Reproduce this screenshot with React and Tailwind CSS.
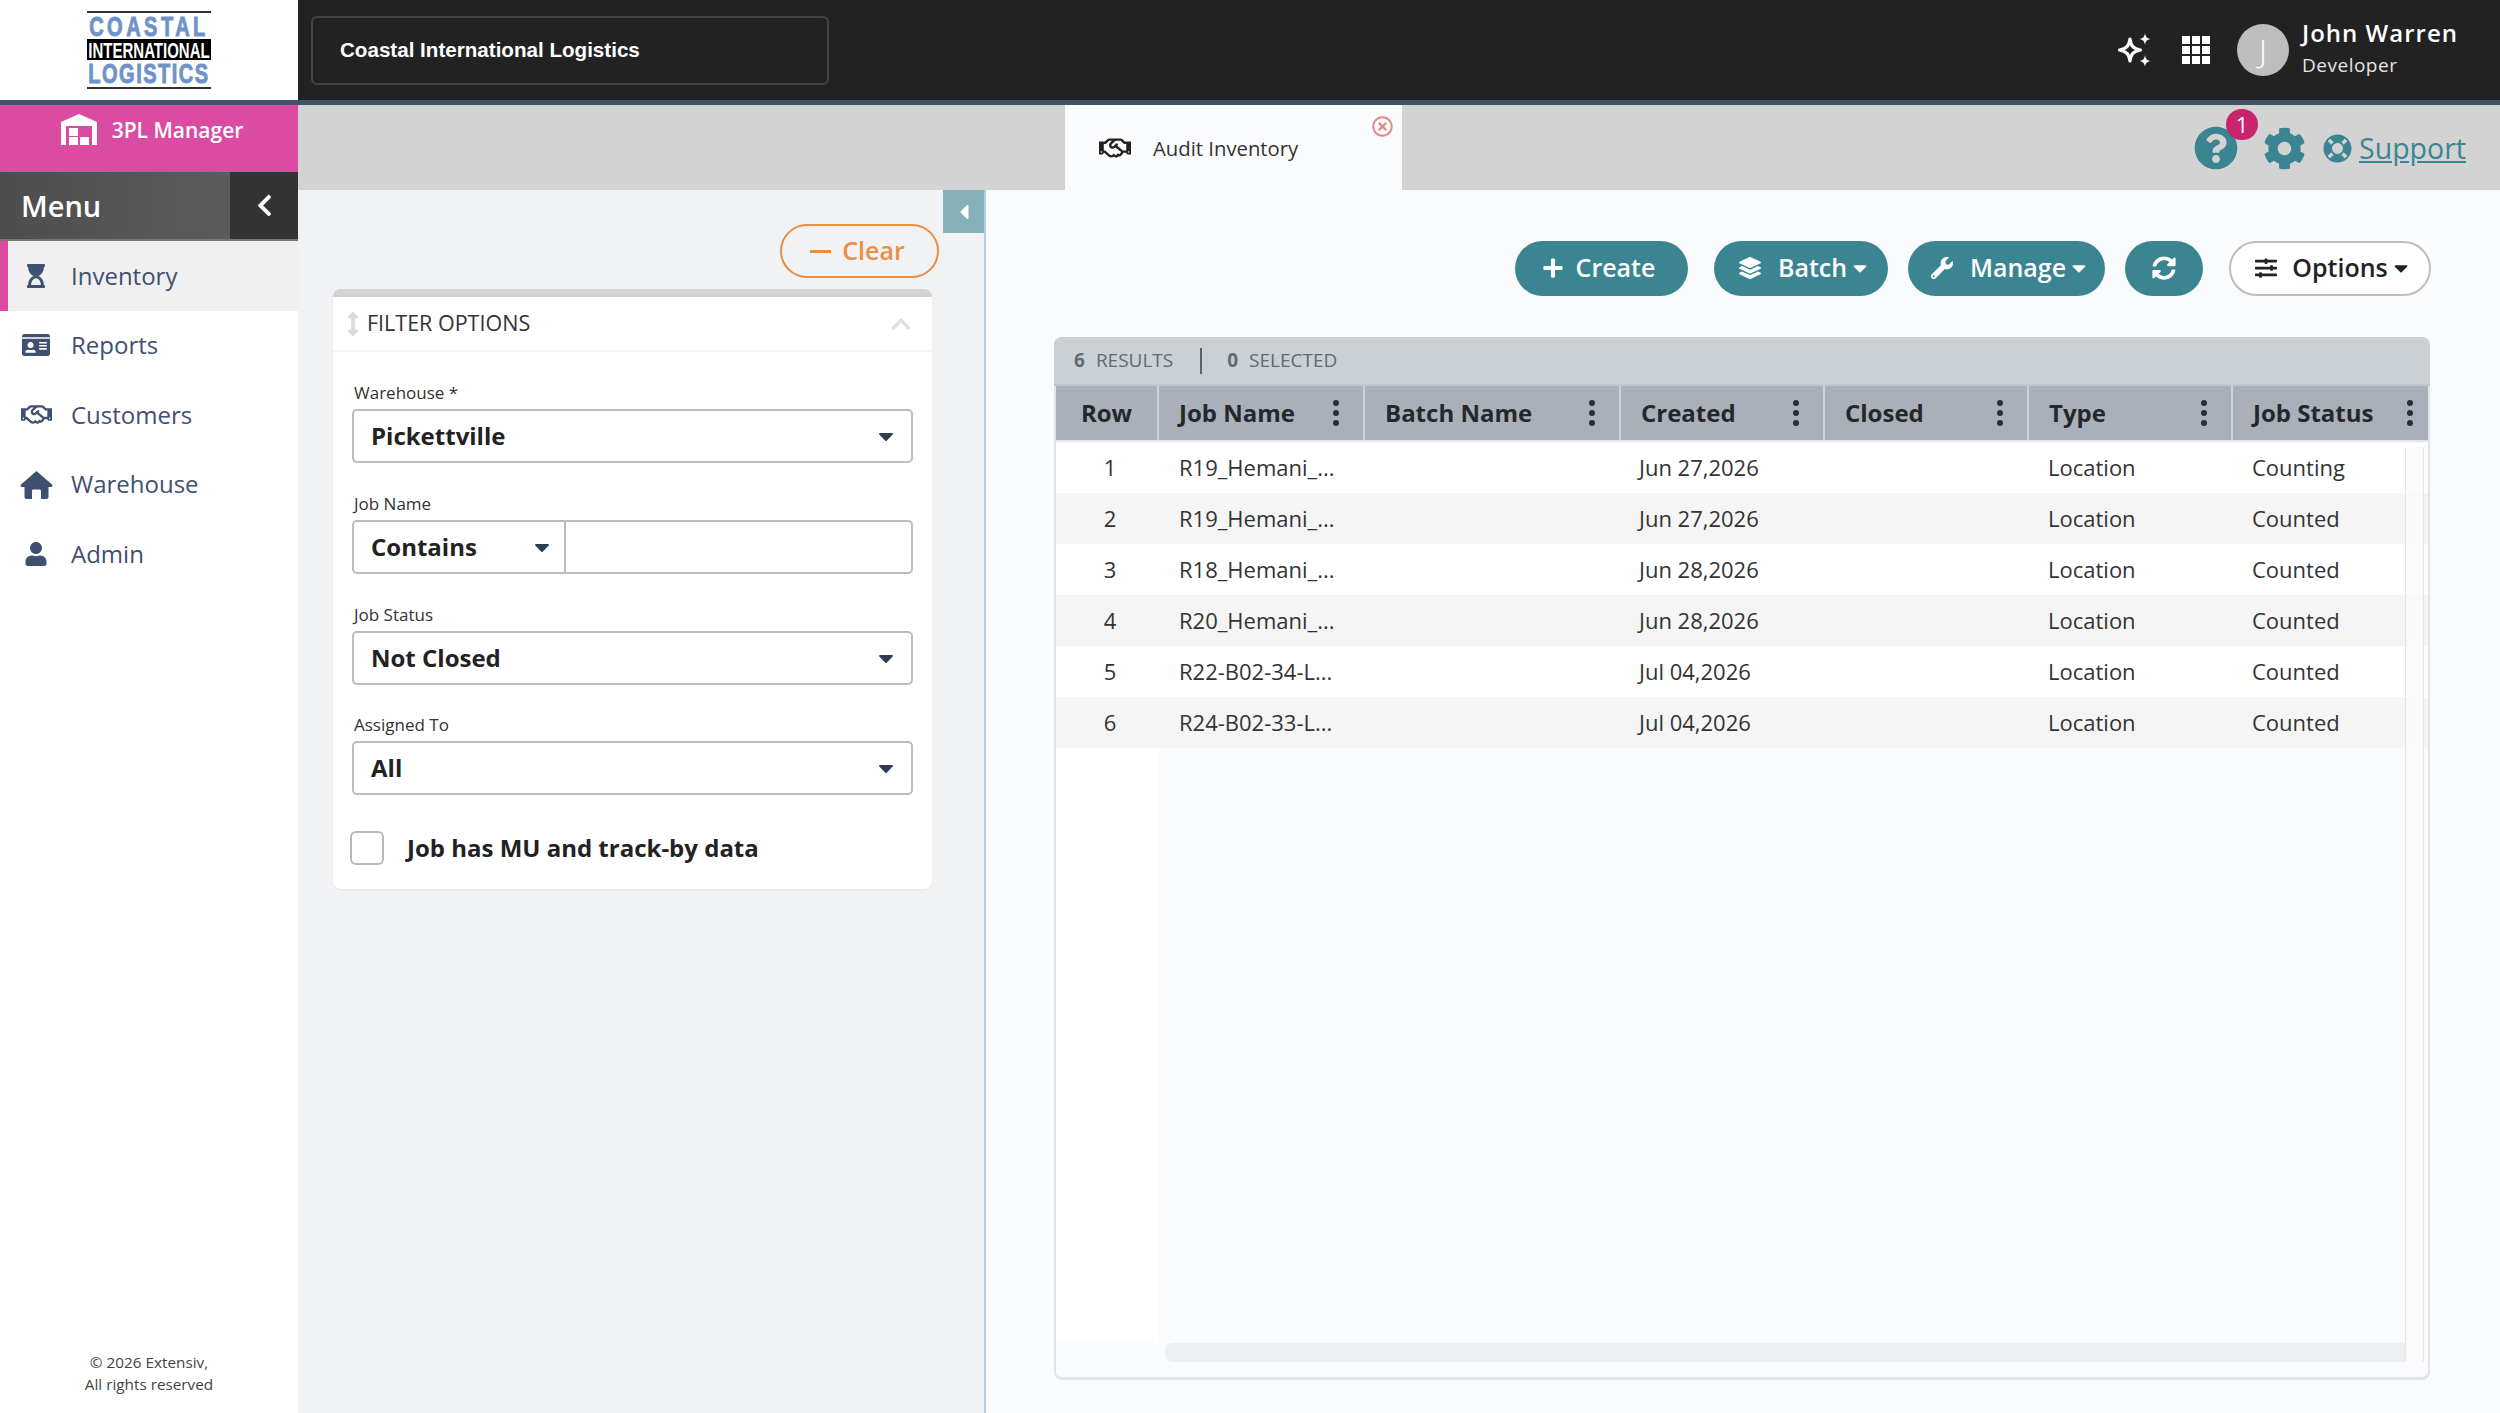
import React from 'react';
import {
    FaHourglassStart, FaIdCard, FaRegHandshake, FaUser, FaChevronLeft, FaPlus, FaLayerGroup,
    FaWrench, FaSyncAlt, FaSlidersH, FaQuestionCircle, FaCog, FaLifeRing, FaCaretDown, FaCaretLeft,
    FaRegTimesCircle, FaChevronUp, FaArrowsAltV,
} from 'react-icons/fa';

const FONT = { fontFamily: '"Open Sans", sans-serif' };

function HomeIcon({ size }) {
    return (
        <svg width={size} height={size} viewBox="0 0 33 33" fill="currentColor">
            <path d="M16.5 3 L32 16.5 C33 17.5 32.3 19 31 19 H28.5 V29 C28.5 30.2 27.5 31 26.5 31 H21 V23 C21 22 20.3 21.5 19.5 21.5 H13.5 C12.7 21.5 12 22 12 23 V31 H6.5 C5.5 31 4.5 30.2 4.5 29 V19 H2 C0.7 19 0 17.5 1 16.5 Z" />
        </svg>
    );
}

const navItems = [
    { label: 'Inventory', icon: FaHourglassStart, size: 24, active: true },
    { label: 'Reports', icon: FaIdCard, size: 28 },
    { label: 'Customers', icon: FaRegHandshake, size: 31 },
    { label: 'Warehouse', icon: HomeIcon, size: 33 },
    { label: 'Admin', icon: FaUser, size: 24 },
];

const columns = [
    { label: 'Job Name', width: 'w-[206px]' },
    { label: 'Batch Name', width: 'w-[256px]' },
    { label: 'Created', width: 'w-[204px]' },
    { label: 'Closed', width: 'w-[204px]' },
    { label: 'Type', width: 'w-[204px]' },
    { label: 'Job Status', width: 'flex-1' },
];

const rows = [
    ['1', 'R19_Hemani_...', '', 'Jun 27,2026', '', 'Location', 'Counting'],
    ['2', 'R19_Hemani_...', '', 'Jun 27,2026', '', 'Location', 'Counted'],
    ['3', 'R18_Hemani_...', '', 'Jun 28,2026', '', 'Location', 'Counted'],
    ['4', 'R20_Hemani_...', '', 'Jun 28,2026', '', 'Location', 'Counted'],
    ['5', 'R22-B02-34-L...', '', 'Jul 04,2026', '', 'Location', 'Counted'],
    ['6', 'R24-B02-33-L...', '', 'Jul 04,2026', '', 'Location', 'Counted'],
];

function Logo() {
    const narrow = { fontFamily: '"Liberation Sans", sans-serif' };
    return (
        <div className="w-[124px] h-[78px] flex flex-col border-y-2 border-[#333]" style={narrow}>
            <div className="h-[24px] mt-[1px] flex items-center justify-center text-[#6f93c9] [-webkit-text-stroke:0.7px_#6f93c9] font-bold text-[20px] leading-none tracking-[3.5px] scale-y-[1.4] whitespace-nowrap">COASTAL</div>
            <div className="h-[21px] mt-[1px] bg-black flex items-center justify-center text-white font-bold text-[15px] leading-none whitespace-nowrap">
                <span className="scale-y-[1.5] inline-block">INTERNATIONAL</span>
            </div>
            <div className="h-[24px] mt-[1px] flex items-center justify-center text-[#6f93c9] [-webkit-text-stroke:0.7px_#6f93c9] font-bold text-[20px] leading-none tracking-[1.5px] scale-y-[1.4] whitespace-nowrap">LOGISTICS</div>
        </div>
    );
}

function WarehouseIcon() {
    return (
        <svg width="36" height="31" viewBox="0 0 36 31" fill="white">
            <path fillRule="evenodd" d="M18 0 L36 8 V31 H31 V12 H5 V31 H0 V8 Z" />
            <rect x="8" y="14" width="9" height="8" />
            <rect x="8" y="23" width="9" height="8" />
            <rect x="19" y="23" width="9" height="8" />
        </svg>
    );
}

function Sparkle() {
    return (
        <svg width="34" height="34" viewBox="0 0 34 34" fill="none">
            <path d="M12 6 C13 13 15 15.5 22.5 17 C15 18.5 13 21 12 28 C11 21 8.5 18.5 1.5 17 C8.5 15.5 11 13 12 6 Z" stroke="white" strokeWidth="3.2" strokeLinejoin="round" />
            <path d="M27 0 C27.6 4 29 5.4 32.5 6 C29 6.7 27.6 8 27 12 C26.4 8 25 6.7 21.5 6 C25 5.4 26.4 4 27 0 Z" fill="white" />
            <path d="M27 22 C27.6 26 29 27.4 32.5 28 C29 28.7 27.6 30 27 34 C26.4 30 25 28.7 21.5 28 C25 27.4 26.4 26 27 22 Z" fill="white" />
        </svg>
    );
}

function AppsGrid() {
    return (
        <div className="grid grid-cols-3 gap-[2px] w-[28px]">
            {Array.from({ length: 9 }).map((_, i) => <div key={i} className="w-[8px] h-[8px] bg-white" />)}
        </div>
    );
}

function Kebab() {
    return (
        <div className="flex flex-col gap-[4px]">
            <div className="w-[6px] h-[6px] rounded-full bg-[#2b2f33]" />
            <div className="w-[6px] h-[6px] rounded-full bg-[#2b2f33]" />
            <div className="w-[6px] h-[6px] rounded-full bg-[#2b2f33]" />
        </div>
    );
}

function SelectBox({ label, value, className = '' }) {
    return (
        <div className={`flex flex-col ${className}`}>
            <label className="h-[34px] pl-[2px] flex items-center text-[17px] text-[#333] leading-none">{label}</label>
            <div className="h-[54px] rounded-[5px] border-2 border-[#bcbcbc] bg-white flex items-center justify-between pl-[17px] pr-[13px]">
                <span className="text-[24px] font-bold text-[#222]">{value}</span>
                <FaCaretDown size={24} className="text-[#2d3b55]" />
            </div>
        </div>
    );
}

function PillButton({ icon: Icon, label, caret, width, gap = 'gap-[17px]', iconSize = 22 }) {
    return (
        <button className={`${width} ${gap} h-[55px] pb-[2px] rounded-full bg-[#3b8592] text-white flex items-center justify-center text-[25px] font-semibold`}>
            <Icon size={iconSize} />
            {label && (
                <span className="flex items-center gap-[2px]">
                    {label}
                    {caret && <FaCaretDown size={22} />}
                </span>
            )}
        </button>
    );
}

export default function App() {
    return (
        <div className="h-screen w-full flex flex-col overflow-hidden bg-white" style={FONT}>
            {/* top bar */}
            <div className="h-[105px] shrink-0 flex border-b-[5px] border-[#42526b] bg-[#222222]">
                <div className="w-[298px] bg-white flex items-center justify-center">
                    <Logo />
                </div>
                <div className="flex-1 flex items-center pl-[13px] pr-[42px]">
                    <div className="w-[518px] h-[69px] rounded-[6px] border-2 border-[#444] flex items-center pl-[27px] text-white text-[20.6px] font-bold" style={{ fontFamily: '"Liberation Sans", sans-serif' }}>
                        Coastal International Logistics
                    </div>
                    <div className="ml-auto flex items-center">
                        <Sparkle />
                        <div className="ml-[30px]"><AppsGrid /></div>
                        <div className="ml-[27px] w-[52px] h-[52px] rounded-full bg-[#bdbdbd] flex items-center justify-center text-white text-[32px] font-light">J</div>
                        <div className="ml-[13px] flex flex-col text-white -mt-[2px]">
                            <span className="text-[24px] font-semibold tracking-[1px] leading-[32px]">John Warren</span>
                            <span className="text-[19px] tracking-[0.5px] leading-[32px] text-[#e4e4e4]">Developer</span>
                        </div>
                    </div>
                </div>
            </div>

            <div className="flex-1 flex min-h-0">
                {/* sidebar */}
                <aside className="w-[298px] shrink-0 flex flex-col bg-white">
                    <div className="h-[67px] bg-[#dc4ba2] flex items-start justify-center gap-[15px] pt-[9px] pl-[6px]">
                        <WarehouseIcon />
                        <span className="text-white text-[21px] font-semibold leading-[32px]">3PL Manager</span>
                    </div>
                    <div className="h-[69px] flex border-b-2 border-[#777]">
                        <div className="flex-1 bg-gradient-to-r from-[#4d4d4d] to-[#5c5c5c] flex items-center pl-[21px] text-white text-[29px] font-semibold">Menu</div>
                        <div className="w-[68px] bg-[#333333] flex items-center justify-center text-white"><FaChevronLeft size={25} /></div>
                    </div>
                    <nav className="flex flex-col">
                        {navItems.map(item => (
                            <div key={item.label} className={`h-[69.5px] flex items-center text-[24px] text-[#3f5070] border-l-[8px] ${item.active ? 'bg-[#f0f0f0] border-[#dc4ba2]' : 'border-transparent'}`}>
                                <div className="w-[56px] flex justify-center"><item.icon size={item.size} /></div>
                                <span className="ml-[7px]">{item.label}</span>
                            </div>
                        ))}
                    </nav>
                    <div className="mt-auto pb-[18px] text-center text-[15.3px] leading-[22px] text-[#444]">
                        © 2026 Extensiv,<br />All rights reserved
                    </div>
                </aside>

                <div className="flex-1 flex flex-col min-w-0">
                    {/* tab strip */}
                    <div className="h-[85px] shrink-0 bg-[#d3d3d3] flex pl-[767px] pr-[34px]">
                        <div className="relative w-[337px] bg-[#fafbfd] flex items-center pl-[34px] gap-[22px]">
                            <FaRegHandshake size={32} className="text-[#222]" />
                            <span className="text-[20.3px] text-[#333] mt-[2px]">Audit Inventory</span>
                            <FaRegTimesCircle size={21} className="absolute right-[9px] top-[11px] text-[#e08a85]" />
                        </div>
                        <div className="ml-auto flex items-center pt-[1px] text-[#3b8592]">
                            <div className="relative">
                                <FaQuestionCircle size={44} />
                                <span className="absolute -top-[17px] -right-[20px] w-[32px] h-[31px] rounded-full bg-[#c9246c] text-white text-[22px] leading-[31px] text-center">1</span>
                            </div>
                            <FaCog size={43} className="ml-[25px]" />
                            <FaLifeRing size={29} className="ml-[17px]" />
                            <span className="ml-[7px] text-[28.5px] underline">Support</span>
                        </div>
                    </div>

                    <div className="flex-1 flex min-h-0">
                        {/* filter panel */}
                        <div className="relative w-[688px] shrink-0 bg-[#f1f2f4] border-r-2 border-[#b5cfdf] pt-[34px]">
                            <div className="absolute right-0 top-0 w-[41px] h-[43px] bg-[#85b1ba] flex items-center justify-center text-white"><FaCaretLeft size={24} /></div>
                            <div className="flex justify-end pr-[45px]">
                                <button className="w-[159px] h-[54px] pr-[4px] rounded-full border-2 border-[#e98e43] flex items-center justify-center gap-[11px] text-[#e98e43] text-[25px] font-semibold">
                                    <span className="w-[21px] h-[3px] bg-[#e98e43]" />Clear
                                </button>
                            </div>
                            <div className="mt-[11px] ml-[35px] w-[599px] h-[600px] rounded-[8px] bg-white border-t-[8px] border-[#d0d3d8] shadow-[0_1px_2px_rgba(0,0,0,0.05)]">
                                <div className="h-[55px] flex items-center border-b-2 border-[#f5f5f5] pl-[8px] pr-[20px]">
                                    <FaArrowsAltV size={24} className="text-[#dcdcdc]" />
                                    <span className="ml-[2px] text-[21.5px] text-[#333] -mt-[1px]">FILTER OPTIONS</span>
                                    <FaChevronUp size={22} className="ml-auto text-[#dfe1e3]" />
                                </div>
                                <div className="px-[19px] pt-[23px] flex flex-col gap-[22px]">
                                    <SelectBox label="Warehouse *" value="Pickettville" />
                                    <div className="flex flex-col mt-[1px]">
                                        <label className="h-[34px] pl-[2px] flex items-center text-[17px] text-[#333] leading-none">Job Name</label>
                                        <div className="h-[54px] rounded-[5px] border-2 border-[#bcbcbc] bg-white flex">
                                            <div className="w-[212px] border-r-2 border-[#bcbcbc] flex items-center justify-between pl-[17px] pr-[10px]">
                                                <span className="text-[24px] font-bold text-[#222]">Contains</span>
                                                <FaCaretDown size={24} className="text-[#2d3b55]" />
                                            </div>
                                        </div>
                                    </div>
                                    <SelectBox label="Job Status" value="Not Closed" className="mt-[1px]" />
                                    <SelectBox label="Assigned To" value="All" />
                                </div>
                                <div className="mt-[35px] pl-[17px] flex items-center gap-[23px]">
                                    <div className="w-[34px] h-[34px] rounded-[6px] border-2 border-[#b8b8b8] bg-white" />
                                    <span className="text-[24px] font-bold text-[#222]">Job has MU and track-by data</span>
                                </div>
                            </div>
                        </div>

                        {/* results */}
                        <div className="flex-1 bg-[#fafbfd] flex flex-col pl-[68px] pr-[69px] pt-[51px] pb-[33px] min-w-0">
                            <div className="flex justify-end items-center gap-[20px] h-[55px] shrink-0">
                                <PillButton icon={FaPlus} label="Create" width="w-[173px] mr-[6px] pr-[6px]" gap="gap-[12px]" />
                                <PillButton icon={FaLayerGroup} label="Batch" caret width="w-[174px] pl-[8px]" />
                                <PillButton icon={FaWrench} label="Manage" caret width="w-[197px] pl-[8px]" />
                                <PillButton icon={FaSyncAlt} width="w-[78px]" iconSize={24} />
                                <button className="w-[202px] h-[55px] ml-[6px] pb-[2px] pl-[7px] rounded-full border-2 border-[#bdbdbd] bg-white text-[#222] flex items-center justify-center gap-[15px] text-[25px] font-semibold">
                                    <FaSlidersH size={22} />
                                    <span className="flex items-center gap-[2px]">Options<FaCaretDown size={22} /></span>
                                </button>
                            </div>

                            <div className="mt-[41px] mr-[1px] flex-1 flex flex-col min-h-0 rounded-[8px] border-x-2 border-b-[3px] border-[#e2e4e8] relative">
                                <div className="h-[49px] rounded-t-[8px] bg-[#cbd0d4] flex items-center pl-[20px] text-[19px] text-[#5f6a73] border-b-2 border-[#bfc5ca] -mx-[2px]">
                                    <b className="font-bold">6</b><span className="ml-[11px]">RESULTS</span>
                                    <div className="w-[2px] h-[26px] bg-[#59636c] ml-[27px]" />
                                    <b className="font-bold ml-[25px]">0</b><span className="ml-[11px]">SELECTED</span>
                                </div>
                                <div className="h-[56px] flex bg-[#a9b0b9] border-b-[2px] border-[#dfe6ec] text-[24px] font-bold text-[#24282c]">
                                    <div className="w-[103px] border-r-2 border-[#c5d3e3] flex items-center justify-center">Row</div>
                                    {columns.map(col => (
                                        <div key={col.label} className={`${col.width} border-r-2 last:border-r-0 last:pr-[15px] first-of-type:pl-[21px] border-[#c5d3e3] flex items-center justify-between pl-[20px] pr-[24px]`}>
                                            <span className="whitespace-nowrap">{col.label}</span>
                                            <Kebab />
                                        </div>
                                    ))}
                                </div>
                                {rows.map((r, i) => (
                                    <div key={r[0]} className={`h-[51px] flex items-center text-[22px] text-[#333] ${i % 2 ? 'bg-[#f5f5f5]' : 'bg-white'}`}>
                                        <div className="w-[103px] text-center pl-[5px]">{r[0]}</div>
                                        <div className="w-[206px] pl-[20px]">{r[1]}</div>
                                        <div className="w-[256px]">{r[2]}</div>
                                        <div className="w-[204px] pl-[18px]">{r[3]}</div>
                                        <div className="w-[204px]">{r[4]}</div>
                                        <div className="w-[204px] pl-[19px]">{r[5]}</div>
                                        <div className="flex-1 pl-[19px]">{r[6]}</div>
                                    </div>
                                ))}
                                <div className="flex-1 flex min-h-0">
                                    <div className="w-[103px] bg-white" />
                                </div>
                                <div className="h-[19px] mb-[15px] ml-[109px] mr-[22px] rounded-l-[8px] bg-[#eeeff1]" />
                                <div className="absolute right-[4px] top-[110px] bottom-[15px] w-[19px] border-x border-[#e4e6e8] bg-[#fafafa]/80" />
                            </div>
                        </div>
                    </div>
                </div>
            </div>
        </div>
    );
}
